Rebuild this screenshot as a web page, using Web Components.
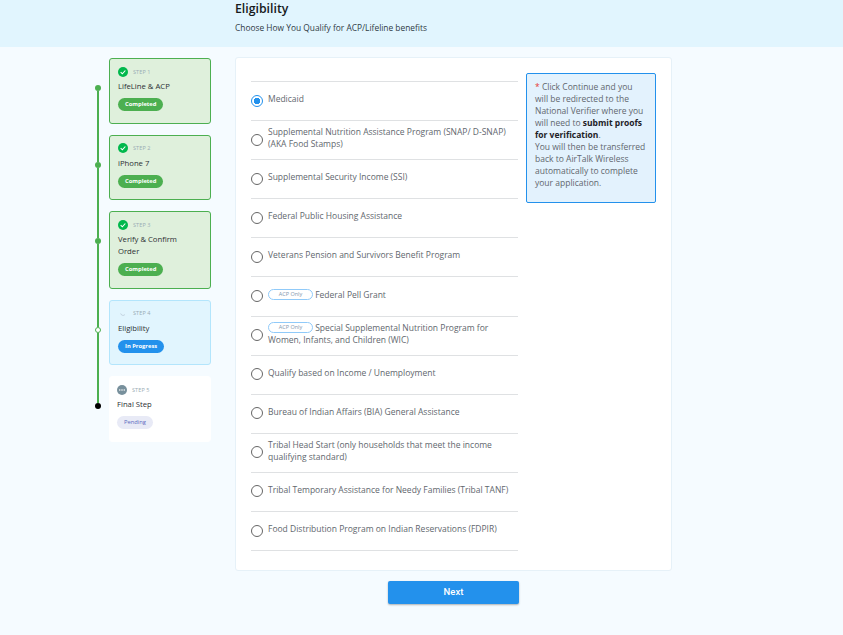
<!DOCTYPE html>
<html>
<head>
<meta charset="utf-8">
<title>Eligibility</title>
<style>
  html, body { margin: 0; padding: 0; }
  body { background: #f5fbff; font-family: "Open Sans", "Liberation Sans", sans-serif; height: 635px; overflow: hidden; }
  .main { display: flex; align-items: flex-start; padding: 10px 0 0 94px; }
  .steps { display: block; width: 117px; margin-right: 24px; padding-top: 1px; }
</style>
</head>
<body>
<page-header heading="Eligibility" sub="Choose How You Qualify for ACP/Lifeline benefits"></page-header>
<div class="main">
  <div class="steps">
    <step-item state="done" step="STEP 1" chip="Completed" first>LifeLine &amp; ACP</step-item>
    <step-item state="done" step="STEP 2" chip="Completed">iPhone 7</step-item>
    <step-item state="done" step="STEP 3" chip="Completed">Verify &amp; Confirm Order</step-item>
    <step-item state="active" step="STEP 4" chip="In Progress">Eligibility</step-item>
    <step-item state="pending" step="STEP 5" chip="Pending" last>Final Step</step-item>
  </div>
  <form-card>
    <radio-row checked>Medicaid</radio-row>
    <radio-row>Supplemental Nutrition Assistance Program (SNAP/ D-SNAP) (AKA Food Stamps)</radio-row>
    <radio-row>Supplemental Security Income (SSI)</radio-row>
    <radio-row>Federal Public Housing Assistance</radio-row>
    <radio-row>Veterans Pension and Survivors Benefit Program</radio-row>
    <radio-row><acp-badge>ACP Only</acp-badge> Federal Pell Grant</radio-row>
    <radio-row><acp-badge>ACP Only</acp-badge> Special Supplemental Nutrition Program for Women, Infants, and Children (WIC)</radio-row>
    <radio-row>Qualify based on Income / Unemployment</radio-row>
    <radio-row>Bureau of Indian Affairs (BIA) General Assistance</radio-row>
    <radio-row>Tribal Head Start (only households that meet the income qualifying standard)</radio-row>
    <radio-row>Tribal Temporary Assistance for Needy Families (Tribal TANF)</radio-row>
    <radio-row last>Food Distribution Program on Indian Reservations (FDPIR)</radio-row>
    <info-note slot="aside"><span class="star">*</span> Click Continue and you<br>will be redirected to the<br>National Verifier where you<br>will need to <b>submit proofs<br>for verification</b>.<br>You will then be transferred<br>back to AirTalk Wireless<br>automatically to complete<br>your application.</info-note>
  </form-card>
</div>
<next-button>Next</next-button>

<script>
/********************************* PageHeader ******************************************/
class PageHeader extends HTMLElement {
  connectedCallback() {
    this.attachShadow({ mode: 'open' }).innerHTML = `
      <style>
        :host { display: block; height: 47px; box-sizing: border-box; background: #e1f5fe; padding: 0 0 0 235px; }
        h1 { margin: 0; padding-top: 1px; font: 600 12.3px/16px "Open Sans", sans-serif; color: #16191c; }
        p { margin: 5px 0 0; font: 400 8.4px/12px "Open Sans", sans-serif; color: #2f3a45; }
      </style>
      <h1>${this.getAttribute('heading')}</h1>
      <p>${this.getAttribute('sub')}</p>`;
  }
}
customElements.define('page-header', PageHeader);

/********************************* StepItem ******************************************/
const stepIcons = {
  done: `<svg viewBox="0 0 12 12" width="10" height="10"><circle cx="6" cy="6" r="6" fill="#00b84c"/><path d="M3.2 6.2l2 2 3.6-4" fill="none" stroke="#fff" stroke-width="1.3"/></svg>`,
  active: `<svg viewBox="0 0 12 12" width="10" height="10"><path d="M3.2 6.6a3 3 0 0 0 5 1.4" fill="none" stroke="#b9c9d6" stroke-width="1"/></svg>`,
  pending: `<svg viewBox="0 0 12 12" width="10" height="10"><circle cx="6" cy="6" r="6" fill="#78909c"/><circle cx="3.3" cy="6" r=".9" fill="#fff"/><circle cx="6" cy="6" r=".9" fill="#fff"/><circle cx="8.7" cy="6" r=".9" fill="#fff"/></svg>`
};

class StepItem extends HTMLElement {
  connectedCallback() {
    const state = this.getAttribute('state');
    this.attachShadow({ mode: 'open' }).innerHTML = `
      <style>
        :host { display: grid; grid-template-columns: 15px 102px; }
        .rail { display: flex; flex-direction: column; align-items: center; width: 8px; }
        .seg { width: 2px; background: #4caf50; }
        .seg.top { height: 27px; }
        .seg.bottom { flex: 1; }
        :host([first]) .seg.top { background: transparent; }
        :host([last]) .seg.bottom { background: transparent; }
        .dot { width: 6px; height: 6px; border-radius: 50%; background: #4caf50; box-sizing: border-box; }
        :host([state="active"]) .dot { background: #fff; border: 1.5px solid #4caf50; }
        :host([state="pending"]) .dot { background: #000; }
        .wrap { padding-bottom: 11px; }
        :host([last]) .wrap { padding-bottom: 0; }
        .card { box-sizing: border-box; padding: 7px 8px 11.5px; border: 1px solid; border-radius: 3px; }
        :host([state="done"]) .card { background: #dff0dc; border-color: #4caf50; }
        :host([state="active"]) .card { background: #e1f5fe; border-color: #b3e5fc; }
        :host([state="pending"]) .card { background: #fff; border-color: #fff; padding-left: 7px; }
        .top-row { display: flex; align-items: center; gap: 5px; height: 11px; }
        .num { font: 400 5.5px/10px "Open Sans", sans-serif; color: #9aacb4; letter-spacing: .1px; }
        .title { margin-top: 3px; max-width: 70px; font: 400 7.7px/12px "Open Sans", sans-serif; color: #2c2f33; }
        .chip { display: block; width: fit-content; margin-top: 6px; height: 13px; padding: 0 7px; border-radius: 7px; font: 700 5.8px/13px "Open Sans", sans-serif; color: #fff; }
        :host([state="done"]) .chip { background: #4caf50; }
        :host([state="active"]) .chip { background: #2391ec; }
        :host([state="pending"]) .chip { background: #e8eaf6; color: #5c6bc0; font-weight: 400; }
      </style>
      <div class="rail"><div class="seg top"></div><div class="dot"></div><div class="seg bottom"></div></div>
      <div class="wrap">
        <div class="card">
          <div class="top-row">${stepIcons[state]}<span class="num">${this.getAttribute('step')}</span></div>
          <div class="title"><slot></slot></div>
          <span class="chip">${this.getAttribute('chip')}</span>
        </div>
      </div>`;
  }
}
customElements.define('step-item', StepItem);

/********************************* FormCard ******************************************/
let formCardTemplate = document.createElement('template');
formCardTemplate.innerHTML = `
  <style>
    :host { display: flex; align-items: flex-start; box-sizing: border-box; width: 437px; height: 514px; padding: 15px 15px 0 15px; background: #fff; border: 1px solid #e6f1f8; border-radius: 3px; }
    .rows { width: 267px; margin-top: 8px; margin-right: 8px; }
  </style>
  <div class="rows"><slot></slot></div>
  <slot name="aside"></slot>`;
class FormCard extends HTMLElement {
  constructor() {
    super();
    this.attachShadow({ mode: 'open' }).appendChild(formCardTemplate.content.cloneNode(true));
  }
}
customElements.define('form-card', FormCard);

/********************************* RadioRow ******************************************/
let radioRowTemplate = document.createElement('template');
radioRowTemplate.innerHTML = `
  <style>
    :host { display: flex; align-items: center; gap: 5px; box-sizing: border-box; height: 39.1px; border-top: 1px solid #dfe1e3; font: 400 8.5px/12px "Open Sans", sans-serif; color: #62676e; }
    :host([last]) { border-bottom: 1px solid #dfe1e3; height: 40px; }
    .radio { flex: none; box-sizing: border-box; width: 12px; height: 12px; margin-top: -1px; border: 1.5px solid #666; border-radius: 50%; }
    :host([checked]) .radio { border-color: #2391ec; background: radial-gradient(circle, #2391ec 0 3px, #fff 3.5px); }
    .text { margin-top: -4px; }
  </style>
  <span class="radio"></span>
  <span class="text"><slot></slot></span>`;
class RadioRow extends HTMLElement {
  constructor() {
    super();
    this.attachShadow({ mode: 'open' }).appendChild(radioRowTemplate.content.cloneNode(true));
  }
}
customElements.define('radio-row', RadioRow);

/********************************* AcpBadge ******************************************/
class AcpBadge extends HTMLElement {
  connectedCallback() {
    this.attachShadow({ mode: 'open' }).innerHTML = `
      <style>
        :host { display: inline-block; box-sizing: border-box; width: 45px; height: 11px; border: 1px solid #90caf9; border-radius: 6px; text-align: center; font: 400 5.5px/9px "Open Sans", sans-serif; color: #8398ad; vertical-align: 2px; }
      </style>
      <slot></slot>`;
  }
}
customElements.define('acp-badge', AcpBadge);

/********************************* InfoNote ******************************************/
class InfoNote extends HTMLElement {
  connectedCallback() {
    this.attachShadow({ mode: 'open' }).innerHTML = `
      <style>
        :host { display: block; box-sizing: border-box; width: 130px; height: 130px; padding: 7px 8px; background: #e3f2fd; border: 1px solid #2391ec; border-radius: 2px; font: 400 8.5px/12px "Open Sans", sans-serif; color: #62676e; white-space: nowrap; }
        ::slotted(b) { color: #1d2126; }
        ::slotted(.star) { color: #e53935; }
      </style>
      <slot></slot>`;
  }
}
customElements.define('info-note', InfoNote);

/********************************* NextButton ******************************************/
class NextButton extends HTMLElement {
  connectedCallback() {
    this.attachShadow({ mode: 'open' }).innerHTML = `
      <style>
        :host { display: block; box-sizing: border-box; width: 131px; height: 23px; margin: 10px 0 0 388px; background: #2391ec; border-radius: 2px; box-shadow: 0 1px 2px rgba(0,0,0,.3); text-align: center; font: 500 9.5px/22px Roboto, sans-serif; color: #fff; }
      </style>
      <slot></slot>`;
  }
}
customElements.define('next-button', NextButton);
</script>
</body>
</html>
